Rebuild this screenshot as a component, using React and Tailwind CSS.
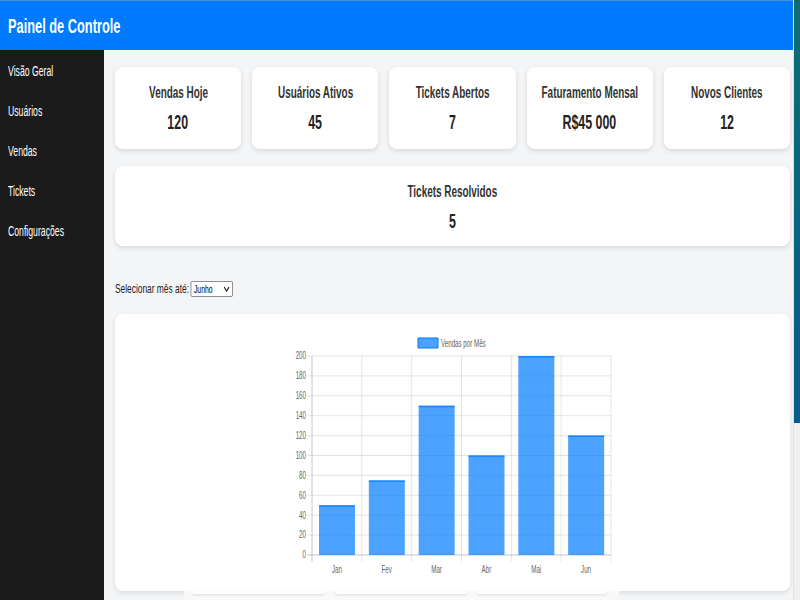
import React from "react";

const K = 0.62;
const X = (x) => (x - 283) / K;
const Y = (y) => y - 330;

function T({ children, className = "" }) {
  return (
    <span className={"inline-block whitespace-nowrap scale-x-[0.62] " + className}>
      {children}
    </span>
  );
}

function StatCard({ title, value, className = "" }) {
  return (
    <div
      className={
        "bg-white rounded-lg shadow-[0_2px_5px_rgba(0,0,0,0.12)] flex flex-col items-center gap-2 " +
        className
      }
    >
      <div className="text-[16px] leading-[18px] font-bold text-[#333]">
        <T>{title}</T>
      </div>
      <div className="text-[20px] leading-[24px] font-bold text-[#222]">
        <T>{value}</T>
      </div>
    </div>
  );
}

function Chart() {
  const data = [
    ["Jan", 50],
    ["Fev", 75],
    ["Mar", 150],
    ["Abr", 100],
    ["Mai", 200],
    ["Jun", 120],
  ];
  const step = 49.83;
  const base = 555;
  const u = 0.995;
  const ticks = [0, 20, 40, 60, 80, 100, 120, 140, 160, 180, 200];
  return (
    <svg
      width="340"
      height="256"
      viewBox={`0 0 ${340 / K} 256`}
      preserveAspectRatio="none"
      style={{ fontFamily: '"Liberation Sans", Arial, sans-serif' }}
    >
      <rect
        x={X(418)}
        y={Y(338)}
        width={20 / K}
        height={10}
        fill="rgba(0,123,255,0.7)"
        stroke="#007bff"
        strokeWidth="1"
        vectorEffect="non-scaling-stroke"
      />
      <text x={X(441)} y={Y(347)} fontSize="10" fill="#666">
        Vendas por Mês
      </text>
      {ticks.map((v) => {
        const y = Y(base - v * u);
        return (
          <g key={v}>
            <line
              x1={X(307)}
              x2={X(611)}
              y1={y}
              y2={y}
              stroke={v === 0 ? "rgba(0,0,0,0.22)" : "rgba(0,0,0,0.1)"}
              strokeWidth="1"
              vectorEffect="non-scaling-stroke"
            />
            <text x={X(306)} y={y + 3.4} fontSize="10" fill="#666" textAnchor="end">
              {v}
            </text>
          </g>
        );
      })}
      {[0, 1, 2, 3, 4, 5, 6].map((i) => {
        const x = X(312 + i * step);
        return (
          <line
            key={i}
            x1={x}
            x2={x}
            y1={Y(356)}
            y2={Y(562)}
            stroke={i === 0 ? "rgba(0,0,0,0.22)" : "rgba(0,0,0,0.1)"}
            strokeWidth="1"
            vectorEffect="non-scaling-stroke"
          />
        );
      })}
      {data.map(([m, v], i) => {
        const x0 = 312 + i * step + 7;
        const top = base - v * u;
        return (
          <g key={m}>
            <rect
              x={X(x0)}
              y={Y(top)}
              width={36 / K}
              height={v * u}
              fill="rgba(0,123,255,0.7)"
            />
            <line
              x1={X(x0)}
              x2={X(x0 + 36)}
              y1={Y(top) + 0.75}
              y2={Y(top) + 0.75}
              stroke="#1a85ff"
              strokeWidth="1.5"
              vectorEffect="non-scaling-stroke"
            />
            <text
              x={X(312 + i * step + step / 2)}
              y={Y(573)}
              fontSize="10"
              fill="#666"
              textAnchor="middle"
            >
              {m}
            </text>
          </g>
        );
      })}
    </svg>
  );
}

export default function App() {
  const menu = ["Visão Geral", "Usuários", "Vendas", "Tickets", "Configurações"];
  return (
    <div
      className="w-[800px] h-[600px] overflow-hidden flex bg-[#f4f5f7]"
      style={{ fontFamily: '"Liberation Sans", Arial, sans-serif' }}
    >
      <div className="w-[793px] h-full flex flex-col">
        <header className="h-[50px] shrink-0 bg-[#007bff] border-t border-[#4f8fd8] flex items-center px-2">
          <h1 className="text-[20px] font-bold text-white leading-none">
            <span className="inline-block whitespace-nowrap scale-x-[0.64] origin-left">
              Painel de Controle
            </span>
          </h1>
        </header>
        <div className="flex flex-1 min-h-0">
          <nav className="w-[104px] shrink-0 bg-[#1b1b1b] pt-px">
            {menu.map((m) => (
              <div key={m} className="h-10 flex items-center px-2 text-white text-[14px]">
                <T className="origin-left">{m}</T>
              </div>
            ))}
          </nav>
          <main className="flex-1 pl-[11px] pr-[3px] pt-[17px] overflow-hidden">
            <div className="grid grid-cols-5 gap-[11px]">
              <StatCard title="Vendas Hoje" value="120" className="h-[82px] pt-[17px]" />
              <StatCard title="Usuários Ativos" value="45" className="h-[82px] pt-[17px]" />
              <StatCard title="Tickets Abertos" value="7" className="h-[82px] pt-[17px]" />
              <StatCard title="Faturamento Mensal" value="R$45 000" className="h-[82px] pt-[17px]" />
              <StatCard title="Novos Clientes" value="12" className="h-[82px] pt-[17px]" />
            </div>
            <StatCard title="Tickets Resolvidos" value="5" className="mt-[17px] h-[80px] pt-[17px]" />
            <div className="h-[68px] flex items-center pt-[18px]">
              <div className="flex items-center gap-[3px] scale-x-[0.62] origin-left text-[13.5px] text-[#222] whitespace-nowrap">
                <span>Selecionar mês até:</span>
                <div className="w-[68px] h-[16px] bg-white border border-[#767676] rounded-[2px] flex items-center justify-between px-[4px] text-[11px] text-black">
                  <span>Junho</span>
                  <svg width="10" height="6" viewBox="0 0 10 6">
                    <path d="M1 1 L5 5 L9 1" fill="none" stroke="#222" strokeWidth="1.6" />
                  </svg>
                </div>
              </div>
            </div>
            <div className="bg-white rounded-lg shadow-[0_2px_5px_rgba(0,0,0,0.1)] h-[277px] flex flex-col items-center pt-4">
              <Chart />
            </div>
            <div className="ml-[69px] w-[435px] h-[20px] bg-[#f9f9f9] flex pl-[8px] gap-[10px]">
              <div className="w-[133px] h-[3px] bg-white rounded-b-md shadow-[0_1px_3px_rgba(0,0,0,0.12)]" />
              <div className="w-[132px] h-[3px] bg-white rounded-b-md shadow-[0_1px_3px_rgba(0,0,0,0.12)]" />
              <div className="w-[130px] h-[3px] bg-white rounded-b-md shadow-[0_1px_3px_rgba(0,0,0,0.12)]" />
            </div>
          </main>
        </div>
      </div>
      <div className="w-[7px] h-full flex flex-col border-l border-[#dfe3e6]">
        <div className="h-[423px] bg-gradient-to-b from-[#0f6d72] to-[#0a5b8e]" />
        <div className="flex-1 bg-[#f0f0f0]" />
      </div>
    </div>
  );
}
